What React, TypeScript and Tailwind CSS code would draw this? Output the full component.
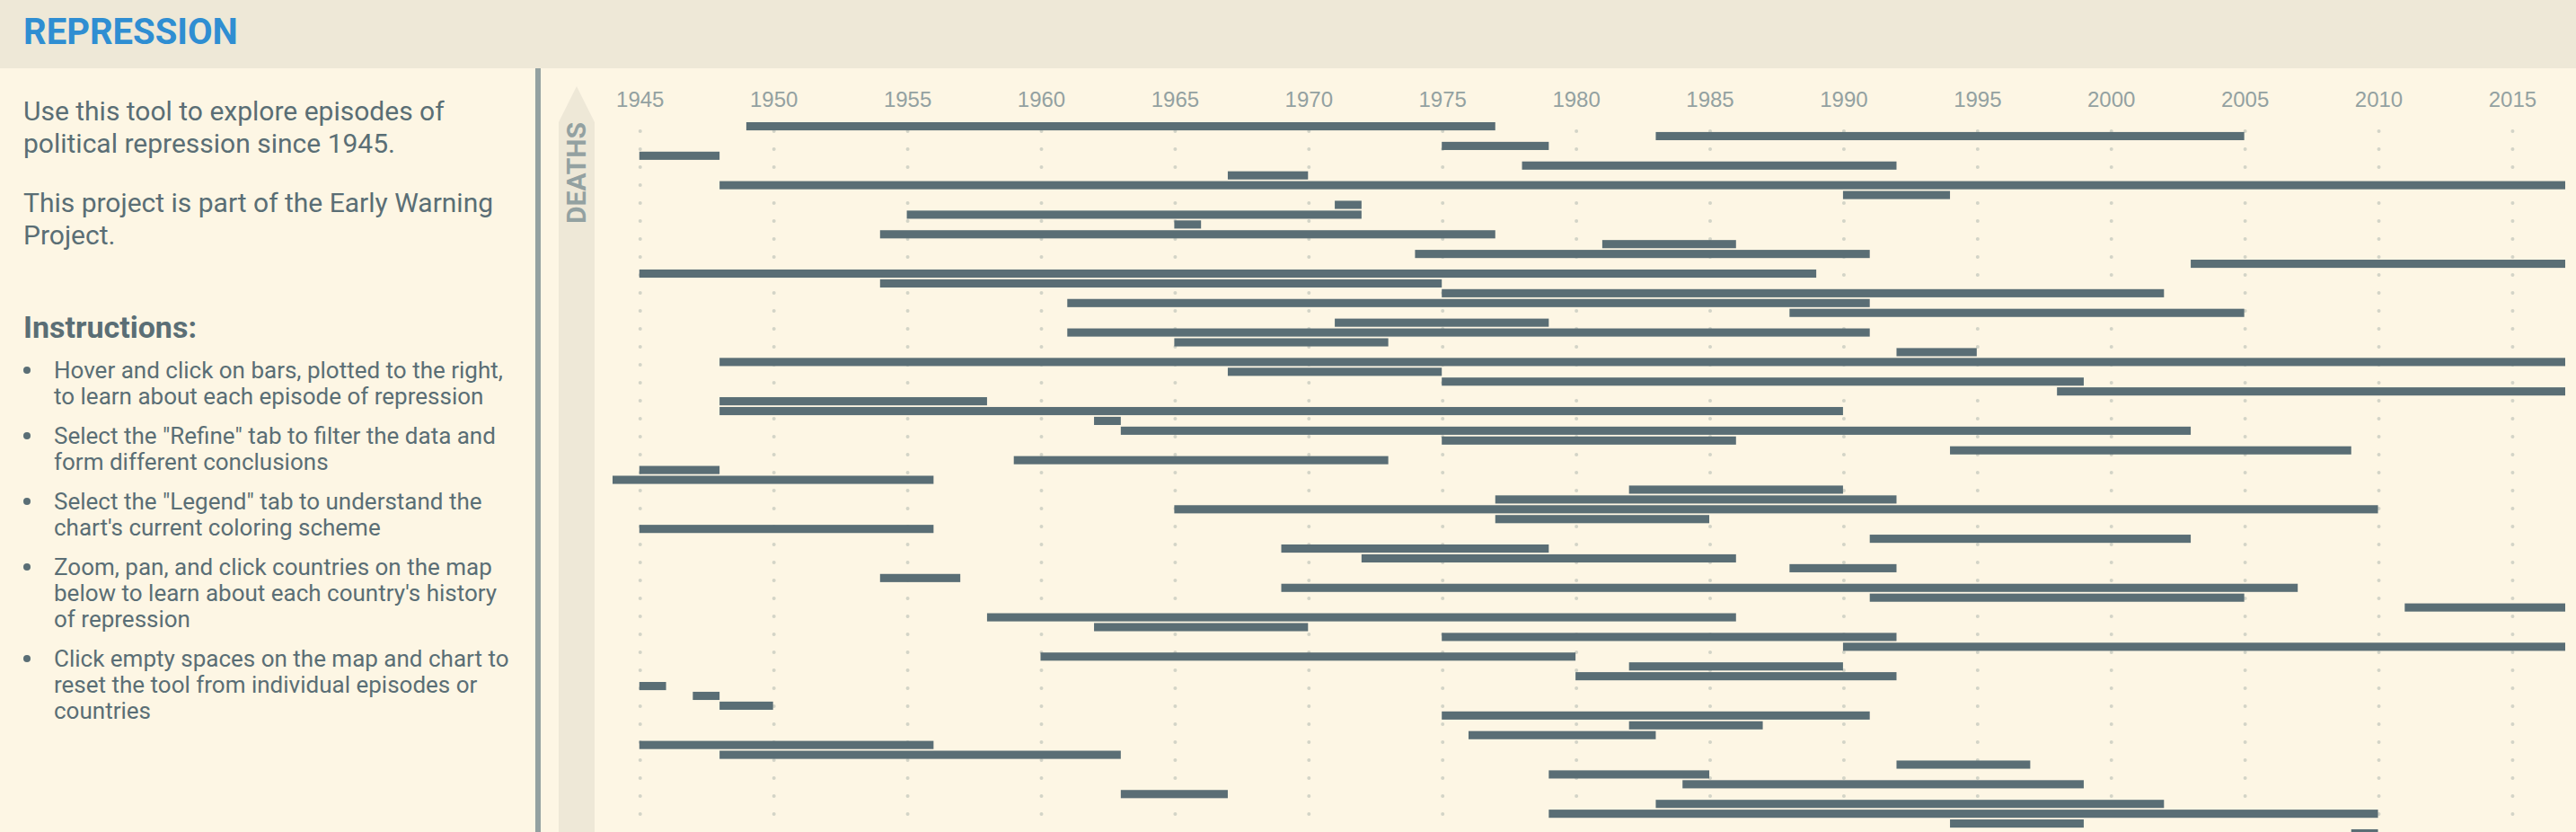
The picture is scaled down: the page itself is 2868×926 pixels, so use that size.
const FIRST_YEAR = 1944;
const LAST_YEAR = 2017;
const ROW_PITCH = 10.93;
const BAR_HEIGHT = 9.1;

// One entry per episode, ordered by death toll: [start year, end year].
const EPISODES: [number, number][] = [
  [1949, 1977], [1983, 2005], [1975, 1979], [1945, 1948], [1978, 1992],
  [1967, 1970], [1948, 2017], [1990, 1994], [1971, 1972], [1955, 1972],
  [1965, 1966], [1954, 1977], [1981, 1986], [1974, 1991], [2003, 2017],
  [1945, 1989], [1954, 1975], [1975, 2002], [1961, 1991], [1988, 2005],
  [1971, 1979], [1961, 1991], [1965, 1973], [1992, 1995], [1948, 2017],
  [1967, 1975], [1975, 1999], [1998, 2017], [1948, 1958], [1948, 1990],
  [1962, 1963], [1963, 2003], [1975, 1986], [1994, 2009], [1959, 1973],
  [1945, 1948], [1944, 1956], [1982, 1990], [1977, 1992], [1965, 2010],
  [1977, 1985], [1945, 1956], [1991, 2003], [1969, 1979], [1972, 1986],
  [1988, 1992], [1954, 1957], [1969, 2007], [1991, 2005], [2011, 2017],
  [1958, 1986], [1962, 1970], [1975, 1992], [1990, 2017], [1960, 1980],
  [1982, 1990], [1980, 1992], [1945, 1946], [1947, 1948], [1948, 1950],
  [1975, 1991], [1982, 1987], [1976, 1983], [1945, 1956], [1948, 1963],
  [1992, 1997], [1979, 1985], [1984, 1999], [1963, 1967], [1983, 2002],
  [1979, 2010], [1994, 1999], [2009, 2010],
];

const TICKS = Array.from({ length: 15 }, (_, i) => 1945 + i * 5);

const INSTRUCTIONS = [
  "Hover and click on bars, plotted to the right, to learn about each episode of repression",
  'Select the "Refine" tab to filter the data and form different conclusions',
  'Select the "Legend" tab to understand the chart\'s current coloring scheme',
  "Zoom, pan, and click countries on the map below to learn about each country's history of repression",
  "Click empty spaces on the map and chart to reset the tool from individual episodes or countries",
];

const percent = (years: number) => `${(years / (LAST_YEAR - FIRST_YEAR)) * 100}%`;

function Sidebar() {
  return (
    <aside className="w-[602px] shrink-0 border-r-6 border-[#93a1a1] pt-[30px] pr-7 pl-[26px] text-[#5a6e75]">
      <div className="flex flex-col gap-[30px] text-[30px] leading-9">
        <p>Use this tool to explore episodes of political repression since 1945.</p>
        <p>This project is part of the Early Warning Project.</p>
      </div>
      <h2 className="mt-16 text-[34px] leading-10 font-bold">Instructions:</h2>
      <ul className="mt-3.5 flex flex-col gap-[15px] text-[26px] leading-[29px]">
        {INSTRUCTIONS.map((text) => (
          <li key={text} className="flex">
            <span className="mt-2.5 mr-[26px] size-2 shrink-0 rounded-full bg-[#5a6e75]" />
            <span>{text}</span>
          </li>
        ))}
      </ul>
    </aside>
  );
}

function DeathsAxis() {
  return (
    <div className="mt-5 flex w-10 shrink-0 flex-col">
      <svg className="block h-10 w-10 shrink-0" viewBox="0 0 40 40" aria-hidden="true">
        <path d="M20 0 40 40H0Z" fill="#eee8d7" />
      </svg>
      <div className="flex grow justify-center bg-[#eee8d7]">
        <span className="h-fit rotate-180 text-[30px] leading-10 font-bold text-[#93a1a1] [writing-mode:vertical-rl]">
          DEATHS
        </span>
      </div>
    </div>
  );
}

function Timeline() {
  return (
    <div className="ml-5 min-w-0 grow pr-3">
      <svg className="block h-full w-full overflow-visible" role="img" aria-label="Episodes of repression by year">
        <g transform="translate(1 0)">
          {TICKS.map((year) => (
            <g key={year}>
              <text
                x={percent(year - FIRST_YEAR)}
                y={43}
                textAnchor="middle"
                fill="#93a1a1"
                className="font-['Liberation_Sans',Arial,sans-serif] text-2xl"
              >
                {year}
              </text>
              <line
                x1={percent(year - FIRST_YEAR)}
                x2={percent(year - FIRST_YEAR)}
                y1={70}
                y2="100%"
                stroke="#d3d4c7"
                strokeWidth={4}
                strokeLinecap="round"
                strokeDasharray="0 20"
              />
            </g>
          ))}
        </g>
        {EPISODES.map(([start, end], row) => (
          <rect
            key={row}
            x={percent(start - FIRST_YEAR)}
            y={60 + row * ROW_PITCH}
            width={percent(end - start)}
            height={BAR_HEIGHT}
            fill="#5a6e75"
          />
        ))}
      </svg>
    </div>
  );
}

export default function App() {
  return (
    <div className="flex h-screen flex-col overflow-hidden bg-[#fdf6e4] font-['Roboto',sans-serif]">
      <header className="shrink-0 bg-[#eee8d7] pt-4 pb-5 pl-[26px]">
        <h1 className="text-[40px] leading-10 font-bold text-[#2f8ed2]">REPRESSION</h1>
      </header>
      <main className="flex min-h-0 grow">
        <Sidebar />
        <div className="flex min-w-0 grow overflow-hidden pl-5">
          <DeathsAxis />
          <Timeline />
        </div>
      </main>
    </div>
  );
}
